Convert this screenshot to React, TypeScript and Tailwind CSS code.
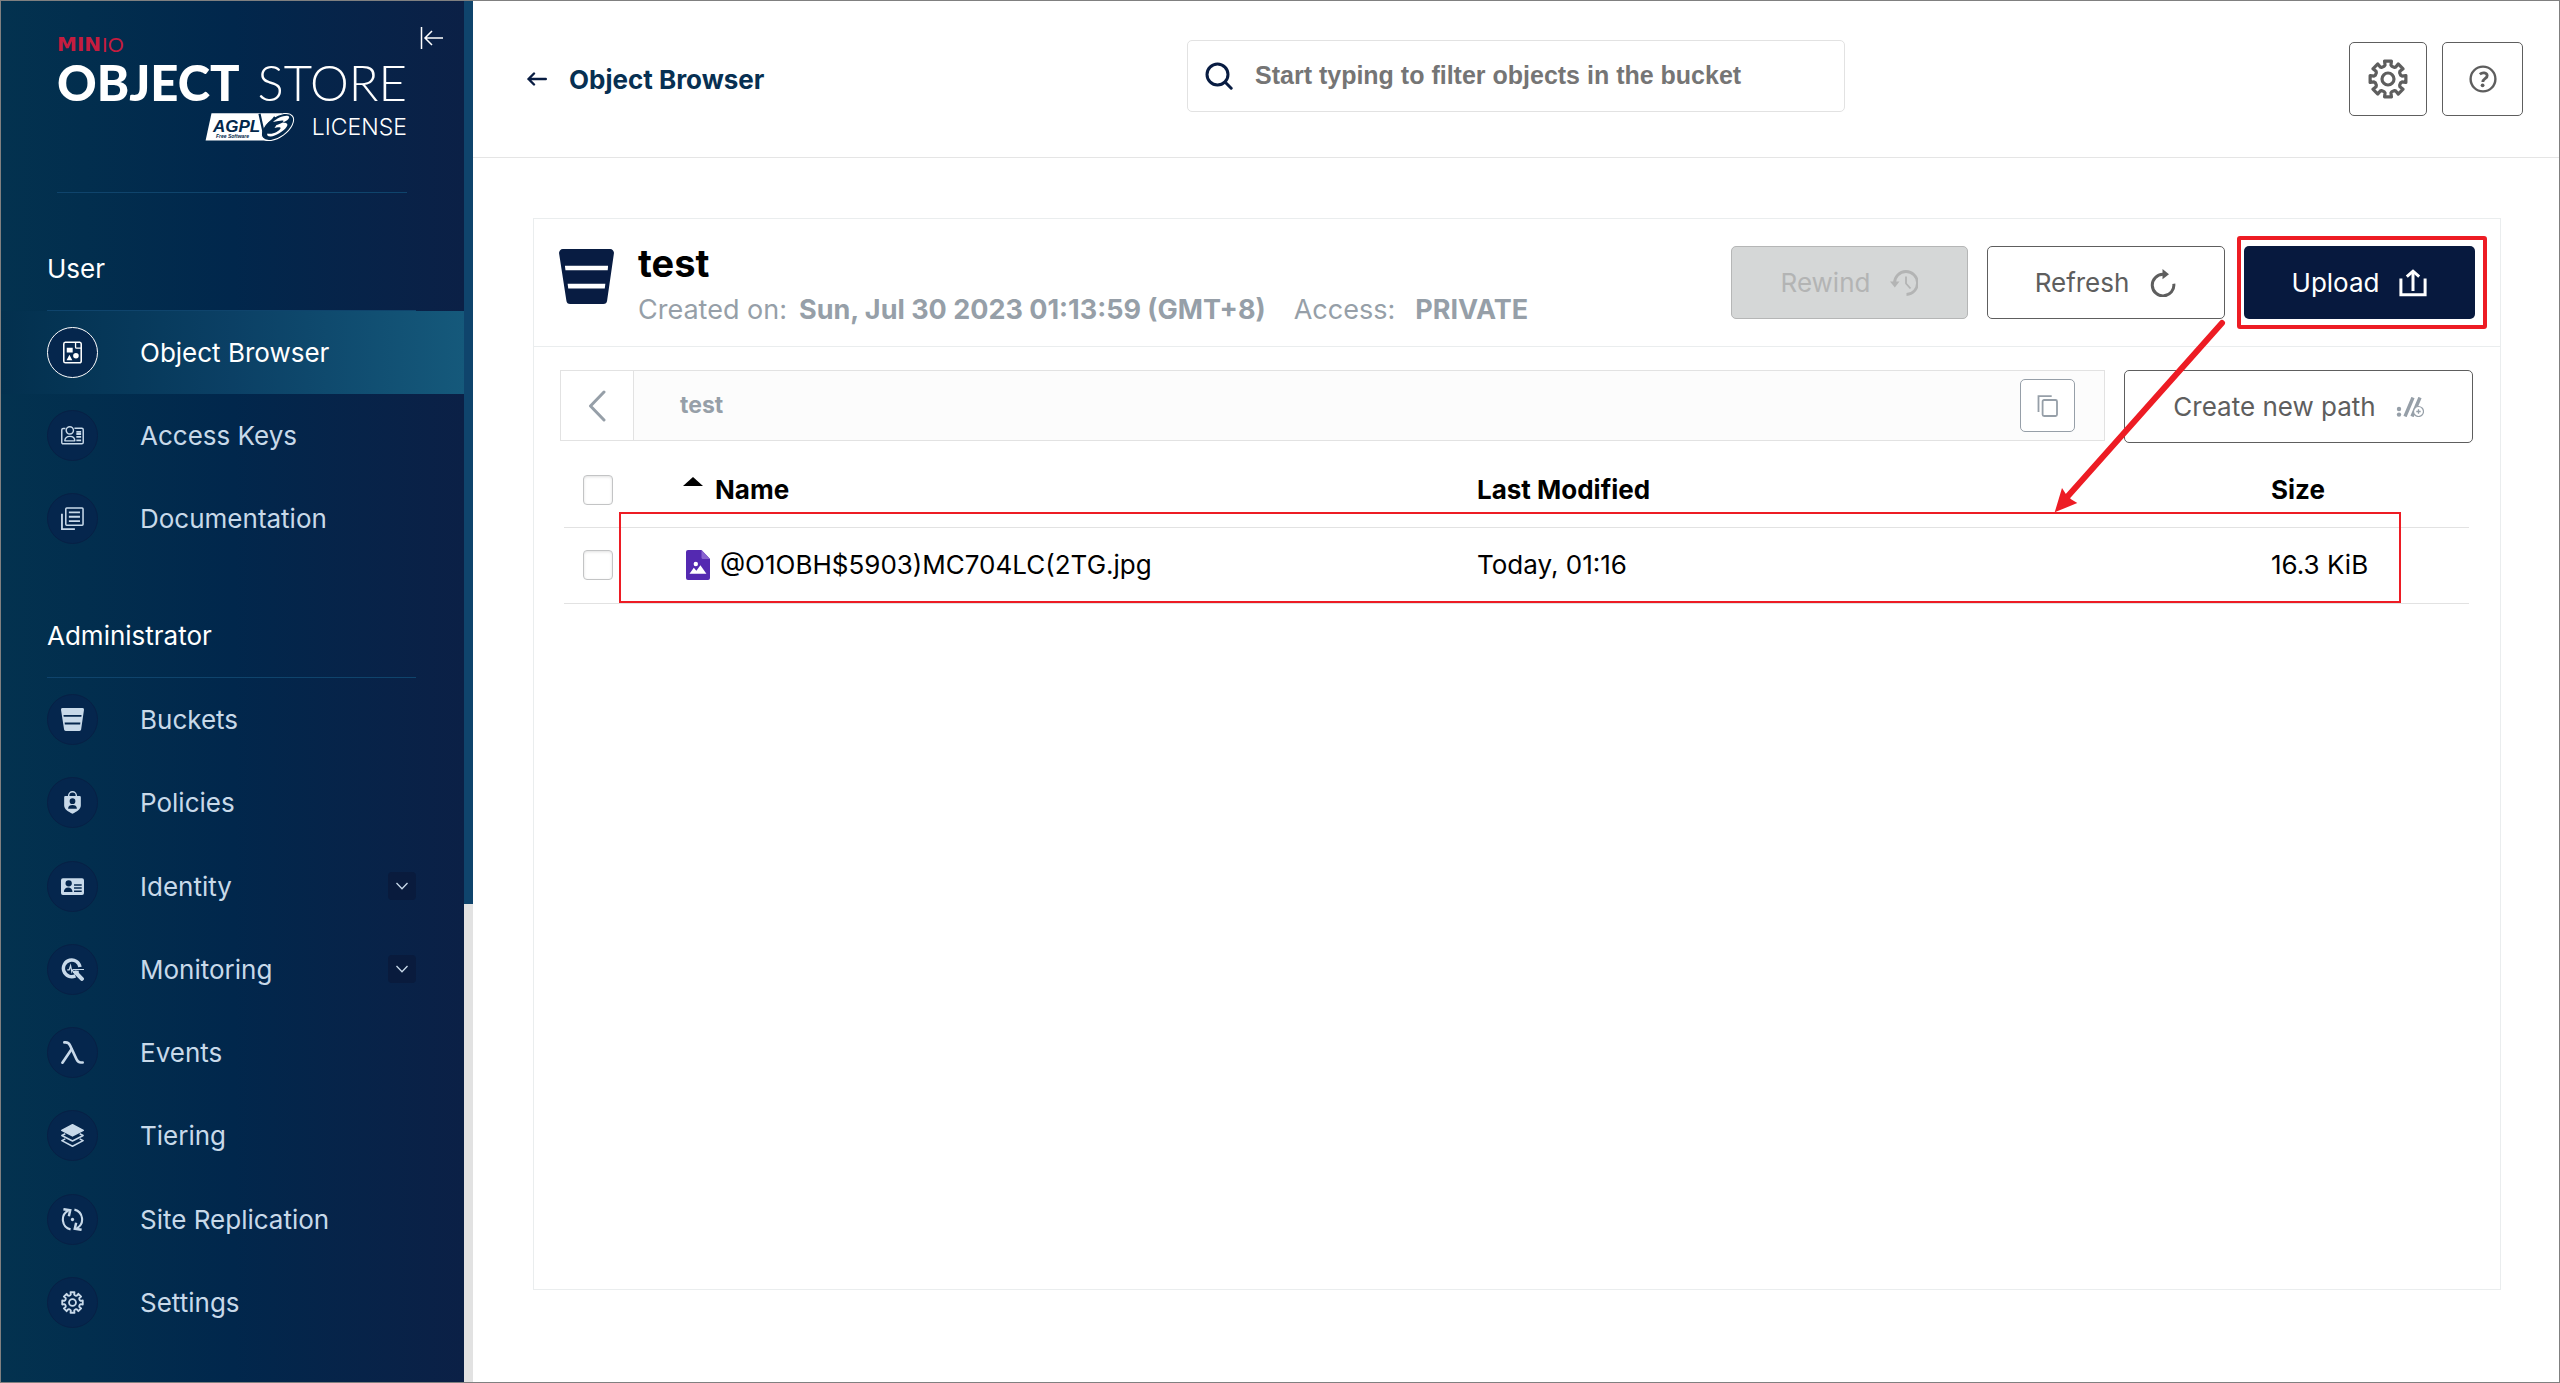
import React, { useState } from "react";
import clsx from "clsx";

type IconProps = { className?: string };

// Outline of a cog with eight flat teeth, centred in a 40x40 box
const gearPath = (() => {
  const pts: string[] = [];
  for (let i = 0; i < 8; i++) {
    const base = (i * Math.PI) / 4 - Math.PI / 2;
    const steps: [number, number][] = [
      [-0.3, 13.2],
      [-0.21, 14.2],
      [-0.19, 18.2],
      [0.19, 18.2],
      [0.21, 14.2],
      [0.3, 13.2],
    ];
    steps.forEach(([a, r]) => {
      pts.push(`${(20 + r * Math.cos(base + a)).toFixed(2)} ${(20 + r * Math.sin(base + a)).toFixed(2)}`);
    });
  }
  return `M${pts.join("L")}Z`;
})();

const GearIcon = ({ className }: IconProps) => (
  <svg className={className} viewBox="0 0 40 40" fill="none" stroke="currentColor" strokeWidth="3.2" strokeLinejoin="round">
    <path d={gearPath} />
    <circle cx="20" cy="20" r="6" />
  </svg>
);

const ObjectBrowserIcon = ({ className }: IconProps) => (
  <svg className={className} viewBox="0 0 24 24" fill="none">
    <path d="M4.5 1.2h15a2 2 0 0 1 1.6 1.8v18a1.8 1.8 0 0 1-1.8 1.8H4.7a1.8 1.8 0 0 1-1.8-1.8V3a1.8 1.8 0 0 1 1.6-1.8Z" stroke="currentColor" strokeWidth="1.6" />
    <path d="M15.2 1.5v5a1 1 0 0 0 1 1H21" stroke="currentColor" strokeWidth="1.4" />
    <path d="M6 7h6.2v5H6zM5.8 20.2 8.8 14.4l3 5.8z" fill="currentColor" />
    <circle cx="15.6" cy="15.4" r="2.9" fill="currentColor" />
  </svg>
);

const AccessKeysIcon = ({ className }: IconProps) => (
  <svg className={className} viewBox="0 0 24 24" fill="none" stroke="currentColor">
    <path d="M4.6 4.6H2.3A1.5 1.5 0 0 0 .8 6v13.2a1.5 1.5 0 0 0 1.5 1.5h19.4a1.5 1.5 0 0 0 1.5-1.5V6a1.5 1.5 0 0 0-1.5-1.5H14" strokeWidth="1.5" />
    <circle cx="9.2" cy="6.6" r="3.8" strokeWidth="1.5" />
    <path d="M4 17.6c0-3 2.2-4.7 5.2-4.7s5.2 1.7 5.2 4.7z" strokeWidth="1.5" strokeLinejoin="round" />
    <path d="M16 8.2h5M16 10.4h5M16 13.4h5M16 17h5" strokeWidth="1.9" />
  </svg>
);

const DocumentationIcon = ({ className }: IconProps) => (
  <svg className={className} viewBox="0 0 24 24" fill="none" stroke="currentColor">
    <path d="M1 7v16h13.5" strokeWidth="1.9" />
    <rect x="5" y="1" width="18" height="18" rx="1" strokeWidth="1.6" />
    <path d="M8.2 5.6h11.6M8.2 10.2h11.6M8.2 14.8h11.6" strokeWidth="1.9" />
  </svg>
);

const BucketIcon = ({ className }: IconProps) => (
  <svg className={className} viewBox="0 0 56 56" fill="currentColor">
    <path
      fillRule="evenodd"
      d="M4 0h48a4 4 0 0 1 3.9 4.6L49 52.4a4 4 0 0 1-4 3.6H11.5a4 4 0 0 1-4-3.6L.1 4.6A4 4 0 0 1 4 0ZM6 17l.6 4.6h43L50 17ZM8.8 35.4l.6 4.8h37.2l.6-4.8Z"
    />
  </svg>
);

const PoliciesIcon = ({ className }: IconProps) => (
  <svg className={className} viewBox="0 0 24 24">
    <path d="M8 6V4.8a4 4 0 0 1 8 0V6" fill="none" stroke="currentColor" strokeWidth="1.5" />
    <path
      fill="currentColor"
      fillRule="evenodd"
      d="M4.5 5.2h15a1.2 1.2 0 0 1 1.2 1.2v8.8c0 4-4.2 6.3-8.7 8.6-4.5-2.3-8.7-4.6-8.7-8.6V6.4a1.2 1.2 0 0 1 1.2-1.2ZM12 7.6a3 3 0 1 0 0 6 3 3 0 0 0 0-6Zm-4.6 10.8h9.2c0-2.5-2-3.7-4.6-3.7s-4.6 1.2-4.6 3.7Z"
    />
  </svg>
);

const IdentityIcon = ({ className }: IconProps) => (
  <svg className={className} viewBox="0 0 24 24" fill="currentColor">
    <path
      fillRule="evenodd"
      d="M2 3.5h20a2 2 0 0 1 2 2v13.3a2 2 0 0 1-2 2H2a2 2 0 0 1-2-2V5.5a2 2 0 0 1 2-2ZM8 5.4a3.3 3.3 0 1 0 0 6.6 3.3 3.3 0 0 0 0-6.6ZM3 17.8h9c0-3-1.8-4.8-4.5-4.8S3 14.8 3 17.8ZM13.6 9.6v1.5h8V9.6Zm0 3.3v1.5h8v-1.5Zm0 3.3v1.5h8v-1.5Z"
    />
  </svg>
);

const MonitoringIcon = ({ className }: IconProps) => (
  <svg className={className} viewBox="0 0 24 24" fill="none" stroke="currentColor">
    <path d="M19.8 9.5A8.7 8.7 0 1 0 15 18.6" strokeWidth="3.6" />
    <path d="m15.5 15.4 6.3 6.4" strokeWidth="4.2" strokeLinecap="round" />
    <path d="M6.5 12.5h2L10 8l1.3 6.5 1.2-2.5H24" strokeWidth="1.3" />
    <path d="M12.5 14.5h6" strokeWidth="2.5" />
  </svg>
);

const LambdaIcon = ({ className }: IconProps) => (
  <svg className={className} viewBox="0 0 24 24" fill="none" stroke="currentColor" strokeWidth="2.8" strokeLinecap="round" strokeLinejoin="round">
    <path d="M3.5 1.5h1.3c2.4 0 3.7 1 4.7 3.2l6.7 14.4c1 2.2 2.3 3.3 4.4 3.3h2" />
    <path d="M11 8.6 1.5 22.6" />
  </svg>
);

const TieringIcon = ({ className }: IconProps) => (
  <svg className={className} viewBox="0 0 24 24" fill="none" stroke="currentColor" strokeWidth="1.6" strokeLinejoin="round">
    <path d="M12 .8 23.2 6.6 12 12.4.8 6.6Z" fill="currentColor" />
    <path d="M4.5 10.2.9 12 12 17.7 23.1 12l-3.6-1.8" />
    <path d="M4.5 15.5.9 17.4 12 23.2l11.1-5.8-3.6-1.9" />
  </svg>
);

const ReplicationIcon = ({ className }: IconProps) => (
  <svg className={className} viewBox="0 0 24 24" fill="none" stroke="currentColor" strokeWidth="2.2">
    <path d="M10 22.3A10.5 10.5 0 0 1 7.6 2.8" />
    <path d="M14 1.7a10.5 10.5 0 0 1 2.4 19.5" />
    <path d="M2.5 1.2 9.6 2.4 8.2 8.6" strokeWidth="2.6" />
    <path d="m21.5 22.8-7.1-1.2 1.4-6.2" strokeWidth="2.6" />
    <circle cx="12" cy="12" r="1.7" fill="currentColor" stroke="none" />
  </svg>
);

const ImageFileIcon = ({ className }: IconProps) => (
  <svg className={className} viewBox="0 0 24 30">
    <path d="M2 0h13.5L24 9v19a2 2 0 0 1-2 2H2a2 2 0 0 1-2-2V2a2 2 0 0 1 2-2Z" fill="#5429b1" />
    <path d="M15.5 0 24 9h-7a1.5 1.5 0 0 1-1.5-1.5Z" fill="#8862cf" />
    <circle cx="9.8" cy="14" r="2.2" fill="#fff" />
    <path d="m3.5 23.8 4.3-6 2.6 3 4-5.6 6 8.6Z" fill="#fff" />
  </svg>
);

const AgplBadge = ({ className }: IconProps) => (
  <svg className={className} viewBox="0 0 90 30" aria-label="AGPL v3 Free Software">
    <path d="M6.5 1.3H77L62 28.6H.6Z" fill="#fff" />
    <ellipse cx="72.5" cy="15" rx="18.5" ry="10" transform="rotate(-36 72.5 15)" fill="#02284c" stroke="#fff" strokeWidth="1" />
    <path d="M54.5 1.8 58.5 20 70 5" fill="none" stroke="#02284c" strokeWidth="2.2" />
    <path
      d="M68 10c4-4.5 14-8 16-5.5 1.2 2.5-3.5 5-7.5 6.5 4.5-1 7.5.5 5 4-3 4.5-11 9-16 9.5-3 0-4-1.5-3-3 5 1.5 12-2.5 13-5 .8-2.2-4-1-6-.5l2-3c3-.8 7-2.5 7-4 0-1.3-5-.3-10.5 1Z"
      fill="#fff"
    />
    <text x="8" y="20" fontSize="17" fontFamily="Liberation Sans" fontStyle="italic" fontWeight="700" fill="#02284c">
      AGPL
    </text>
    <text x="11" y="26" fontSize="5" fontFamily="Liberation Sans" fontStyle="italic" fontWeight="700" fill="#02284c">
      Free Software
    </text>
  </svg>
);

const userItems = [
  { label: "Object Browser", icon: ObjectBrowserIcon },
  { label: "Access Keys", icon: AccessKeysIcon },
  { label: "Documentation", icon: DocumentationIcon },
];

const adminItems = [
  { label: "Buckets", icon: BucketIcon },
  { label: "Policies", icon: PoliciesIcon },
  { label: "Identity", icon: IdentityIcon, expandable: true },
  { label: "Monitoring", icon: MonitoringIcon, expandable: true },
  { label: "Events", icon: LambdaIcon },
  { label: "Tiering", icon: TieringIcon },
  { label: "Site Replication", icon: ReplicationIcon },
  { label: "Settings", icon: GearIcon },
];

type NavItemProps = {
  label: string;
  icon: React.ComponentType<IconProps>;
  active?: boolean;
  expandable?: boolean;
};

const NavItem = ({ label, icon: Icon, active, expandable }: NavItemProps) => (
  <a
    href="#"
    className={clsx(
      "flex items-center gap-[42px] pl-[46px] pr-12 text-[26px]",
      active ? "bg-linear-to-r from-[#03304e] via-[#0b4065] to-[#15597b] text-white" : "text-[#c8d9e9]"
    )}
  >
    <span
      className={clsx(
        "flex size-[51px] shrink-0 items-center justify-center rounded-full border bg-[#05264d]",
        active ? "border-white" : "border-[#072045]"
      )}
    >
      <Icon className="size-[23px]" />
    </span>
    <span className="flex-1 whitespace-nowrap">{label}</span>
    {expandable && (
      <span className="flex size-7 items-center justify-center rounded bg-[#091b3d]">
        <svg className="w-3" viewBox="0 0 12 8" fill="none" stroke="currentColor" strokeWidth="1.3">
          <path d="m.5 1 5.5 5.8L11.5 1" />
        </svg>
      </span>
    )}
  </a>
);

const Sidebar = () => (
  <aside className="flex w-[472px] shrink-0">
    <div className="flex-1 bg-linear-to-r from-[#03324f] via-[#01274c] to-[#0b2046]">
      {/* Logo */}
      <div className="flex items-start gap-[13px] pl-14 pt-[25px]">
        <div className="w-[350px] border-b border-[#0f446c] pb-[50px] pt-[6px] font-[Lato] text-white">
          <div className="mb-[2px] flex h-6 items-center gap-px text-[20px] text-[#c51c3f]">
            <span className="font-['DejaVu_Sans'] font-bold">MIN</span>
            <span>IO</span>
          </div>
          <div className="flex items-center justify-between text-[49px] leading-[48px]">
            <span className="font-black">OBJECT</span>
            <span className="font-light">STORE</span>
          </div>
          <div className="mt-[6px] flex h-[30px] items-center justify-end gap-[17px]">
            <AgplBadge className="h-[30px] w-[90px]" />
            <span className="font-[Inter] text-[23px] font-light">LICENSE</span>
          </div>
        </div>
        <button aria-label="Collapse menu" className="text-white">
          <svg className="h-6 w-6" viewBox="0 0 24 24" fill="none" stroke="currentColor" strokeWidth="1.5">
            <path d="M1.5 1v22M23 12H6M12 5l-7 7 7 7" />
          </svg>
        </button>
      </div>

      <nav>
        <h2 className="ml-[46px] mr-12 mt-[60px] border-b border-[#0f446c] pb-[25px] text-[26px] leading-8 text-white">User</h2>
        <div className="grid h-[249px] auto-rows-fr">
          {userItems.map((item, i) => (
            <NavItem key={item.label} {...item} active={i === 0} />
          ))}
        </div>
        <h2 className="ml-[46px] mr-12 mt-[60px] border-b border-[#0f446c] pb-[25px] text-[26px] leading-8 text-white">
          Administrator
        </h2>
        <div className="grid h-[666px] auto-rows-fr">
          {adminItems.map((item) => (
            <NavItem key={item.label} {...item} />
          ))}
        </div>
      </nav>
    </div>
    {/* Scrollbar */}
    <div className="w-[9px] bg-[#e2e2e2]">
      <div className="h-[903px] bg-[#0f446c]" />
    </div>
  </aside>
);

const Header = () => (
  <header className="grid h-[157px] grid-cols-[1fr_auto_1fr] items-center border-b border-[#e5e5e5]">
    <a href="#" className="flex items-center gap-[22px] pl-[54px] text-[26px] font-bold text-[#073052]">
      <svg className="h-[14px] w-5" viewBox="0 0 20 14" fill="none" stroke="#081c42" strokeWidth="2.4" strokeLinecap="round" strokeLinejoin="round">
        <path d="M18.8 7H1.5M7 1.5 1.5 7 7 12.5" />
      </svg>
      Object Browser
    </a>
    <div className="pb-[6px]">
      <label className="flex h-[72px] w-[658px] items-center gap-[22px] rounded-[5px] border border-[#e2e2e2] px-[17px]">
        <svg className="size-7 shrink-0 text-[#081c42]" viewBox="0 0 28 28" fill="none" stroke="currentColor" strokeWidth="3" strokeLinecap="round">
          <circle cx="12.5" cy="12.5" r="10.5" />
          <path d="m20.5 20.5 5.7 5.7" />
        </svg>
        <input
          type="text"
          aria-label="Filter objects"
          placeholder="Start typing to filter objects in the bucket"
          className="min-w-0 flex-1 font-['Liberation_Sans'] text-[25px] font-bold outline-none placeholder:text-[#757575]"
        />
      </label>
    </div>
    <div className="flex items-center justify-end gap-[15px] pr-9 text-[#5e5e5e]">
      <button aria-label="Settings" className="flex h-[74px] w-[78px] items-center justify-center rounded-[5px] border border-[#5e5e5e]">
        <GearIcon className="size-10" />
      </button>
      <button aria-label="Help" className="flex h-[74px] w-[81px] items-center justify-center rounded-[5px] border border-[#5e5e5e]">
        <svg className="size-7" viewBox="0 0 28 28" fill="none" stroke="currentColor">
          <circle cx="14" cy="14" r="12.4" strokeWidth="2.4" />
          <path d="M10.8 9.3c2.6-2.2 7-1.8 7.4 1.3.3 2.6-4.2 3-4.4 6.4" strokeWidth="2.8" />
          <circle cx="13.6" cy="20.3" r="1.9" fill="currentColor" stroke="none" />
        </svg>
      </button>
    </div>
  </header>
);

const BucketHeader = () => (
  <div className="flex h-[128px] items-center justify-between border-b border-[#eaedee] px-[25px]">
    <div className="flex gap-6 self-start pt-5">
      <BucketIcon className="mt-[10px] size-[55px] text-[#081c42]" />
      <div>
        <h1 className="text-[38px] font-bold leading-[48px]">test</h1>
        <p className="flex text-[27px] leading-[46px] text-[#969fa8]">
          <span>Created on:</span>
          <strong className="ml-3 font-bold">Sun, Jul 30 2023 01:13:59 (GMT+8)</strong>
          <span className="ml-7">Access:</span>
          <strong className="ml-5 font-bold">PRIVATE</strong>
        </p>
      </div>
    </div>
    <div className="flex gap-[19px] text-[26px]">
      <button disabled className="flex h-[73px] w-[237px] items-center justify-center gap-5 rounded-[5px] border border-[#b5b6b6] bg-[#d5d7d7] text-[#b3b4b4]">
        Rewind
        <svg className="size-7" viewBox="0 0 28 28" fill="none" stroke="currentColor" strokeWidth="2.8">
          <path d="M4.5 14A11.5 11.5 0 1 1 16.5 25.5" />
          <path d="M0 12.5h9.5L4.8 18.5Z" fill="currentColor" stroke="none" />
          <path d="M16 7.5v7l4.5 5" strokeWidth="1.8" />
        </svg>
      </button>
      <button className="flex h-[73px] w-[238px] items-center justify-center gap-5 rounded-[5px] border border-[#5e5e5e] text-[#5e5e5e]">
        Refresh
        <svg className="size-7" viewBox="0 0 28 28" fill="none" stroke="currentColor" strokeWidth="3">
          <path d="M24.8 14.8A10.8 10.8 0 1 1 14 5.3h2" />
          <path d="m13.5 0 6.5 5.3-6.5 5Z" fill="currentColor" stroke="none" />
        </svg>
      </button>
      <div className="relative">
        <button className="flex h-[73px] w-[231px] items-center justify-center gap-5 rounded-[5px] bg-[#07193e] text-white">
          Upload
          <svg className="size-7" viewBox="0 0 28 28" fill="none" stroke="currentColor" strokeWidth="3">
            <path d="M1.9 9.5v16.3h24.2V9.5" />
            <path d="M14 22V4" />
            <path d="M7.8 7.6 14 2.2l6.2 5.4" />
          </svg>
        </button>
        <div className="pointer-events-none absolute -inset-y-[10px] -left-[7px] -right-3 rounded-[3px] border-4 border-[#ed1c24]" />
        <svg className="pointer-events-none absolute right-[245px] top-[70px] h-[200px] w-[180px] max-w-none" viewBox="0 0 180 200" fill="#ed1c24">
          <path d="M172 7 18 180" stroke="#ed1c24" strokeWidth="6" strokeLinecap="round" />
          <path d="M4.7 196.3 12 172l4.5 7 5 4.5 5.8 3.5Z" />
        </svg>
      </div>
    </div>
  </div>
);

const PathBar = () => (
  <div className="flex items-start gap-[19px]">
    <div className="flex h-[71px] flex-1 border border-[#e2e2e2] bg-[#fcfcfc]">
      <button aria-label="Back" className="flex w-[73px] items-center justify-center border-r border-[#e2e2e2] bg-white">
        <svg className="h-8 w-[18px]" viewBox="0 0 18 32" fill="none" stroke="#969fa8" strokeWidth="3" strokeLinecap="round" strokeLinejoin="round">
          <path d="M16 2 2.5 16 16 30" />
        </svg>
      </button>
      <div className="flex flex-1 items-center justify-between pl-[46px] pr-[29px]">
        <span className="text-[23px] font-bold text-[#969fa8]">test</span>
        <button aria-label="Copy path" className="flex h-[53px] w-[55px] items-center justify-center rounded-[5px] border border-[#969fa8] bg-white">
          <svg className="size-[22px]" viewBox="0 0 22 22" fill="none" stroke="#969fa8" strokeWidth="1.8">
            <path d="M1.5 17V1.2h13.2" />
            <rect x="5.6" y="5" width="14.4" height="16" rx="1.5" />
          </svg>
        </button>
      </div>
    </div>
    <button className="flex h-[73px] w-[349px] items-center justify-center gap-5 rounded-[5px] border border-[#5e5e5e] text-[26px] text-[#5e5e5e]">
      Create new path
      <svg className="h-5 w-7" viewBox="0 0 28 20" fill="none" stroke="#969fa8">
        <circle cx="3" cy="12" r="2.2" fill="#969fa8" stroke="none" />
        <circle cx="3" cy="17.6" r="2.2" fill="#969fa8" stroke="none" />
        <path d="M9 19.5 17 .5M16 19.5 24 .5" strokeWidth="3.4" />
        <circle cx="22.5" cy="14.5" r="5" fill="#fff" strokeWidth="1.2" />
        <path d="M22.5 12.3v4.4M20.3 14.5h4.4" strokeWidth="1.3" />
      </svg>
    </button>
  </div>
);

const checkboxClass =
  "block size-[30px] appearance-none rounded-[4px] border border-[#c3c4c5] bg-white shadow-[inset_0_1px_3px_#0000001f] checked:bg-[#4ccb92]";

const ObjectTable = () => {
  const [selected, setSelected] = useState(false);
  const toggle = () => setSelected(!selected);

  return (
    <div className="relative mx-1 mt-[10px]">
      <table className="w-full table-fixed text-left text-[26px] leading-8">
        <thead>
          <tr className="h-[74px] border-b border-[#e2e2e2]">
            <th className="w-[119px] pl-[19px]">
              <input type="checkbox" aria-label="Select all" checked={selected} onChange={toggle} className={checkboxClass} />
            </th>
            <th className="font-bold">
              <span className="flex items-center gap-3">
                <svg className="mb-4 h-[9px] w-5" viewBox="0 0 20 9">
                  <path d="M10 0 20 9H0Z" />
                </svg>
                Name
              </span>
            </th>
            <th className="font-bold">Last Modified</th>
            <th className="w-[198px] font-bold">Size</th>
          </tr>
        </thead>
        <tbody>
          <tr className="h-[76px] border-b border-[#e2e2e2]">
            <td className="pl-[19px]">
              <input type="checkbox" aria-label="Select object" checked={selected} onChange={toggle} className={checkboxClass} />
            </td>
            <td>
              <span className="flex items-center gap-[10px] pl-[3px]">
                <ImageFileIcon className="h-[30px] w-6" />
                @O1OBH$5903)MC704LC(2TG.jpg
              </span>
            </td>
            <td>Today, 01:16</td>
            <td>16.3 KiB</td>
          </tr>
        </tbody>
      </table>
      <div className="pointer-events-none absolute bottom-px left-[55px] right-[68px] h-[91px] border-2 border-[#ed1c24]" />
    </div>
  );
};

const App = () => (
  <div className="flex min-h-screen border border-[#808080] bg-white font-[Inter,sans-serif] text-black">
    <Sidebar />
    <div className="flex min-w-0 flex-1 flex-col">
      <Header />
      <main className="flex flex-1 flex-col pb-[92px] pl-[60px] pr-[58px] pt-[60px]">
        <section className="flex-1 border border-[#eaedee]">
          <BucketHeader />
          <div className="pl-[26px] pr-[27px] pt-[23px]">
            <PathBar />
            <ObjectTable />
          </div>
        </section>
      </main>
    </div>
  </div>
);

export default App;
